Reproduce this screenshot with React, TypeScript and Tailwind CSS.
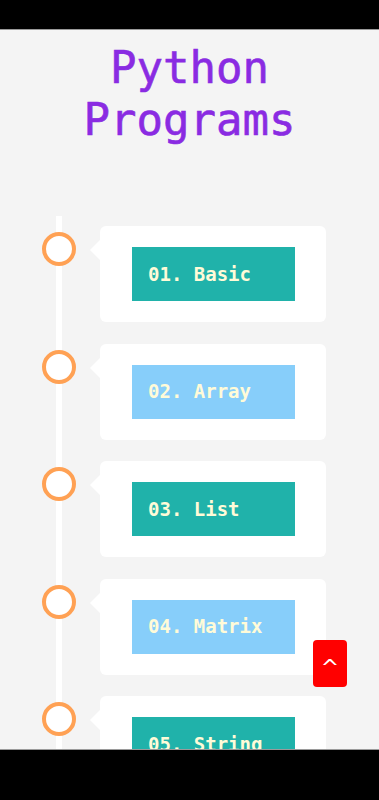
const programs = [
  { id: "01", name: "Basic", color: "bg-[#20b2aa]" },
  { id: "02", name: "Array", color: "bg-[#87cefa]" },
  { id: "03", name: "List", color: "bg-[#20b2aa]" },
  { id: "04", name: "Matrix", color: "bg-[#87cefa]" },
  { id: "05", name: "String", color: "bg-[#20b2aa]" },
  { id: "06", name: "Dictionary", color: "bg-[#87cefa]" },
];

export default function App() {
  return (
    <div className="h-[800px] w-[379px] flex flex-col bg-black overflow-hidden font-['DejaVu_Sans_Mono',monospace]">
      {/* top bar */}
      <div className="h-[30px] shrink-0 bg-black border-b border-[#9a9a9a]" />

      <main className="relative flex-1 overflow-hidden bg-[#f4f4f4]">
        <h1 className="mt-[12px] text-center text-[44px] leading-[52px] text-[#8a2be2] [-webkit-text-stroke:0.6px_#8a2be2]">
          Python
          <br />
          Programs
        </h1>

        {/* timeline */}
        <div className="relative mt-[70px] flex flex-col gap-[21.5px] pt-[10px] pl-[42px]">
          <div className="absolute left-[56px] top-0 h-[900px] w-[6px] bg-white" />
          {programs.map((p) => (
            <div key={p.id} className="relative flex items-start">
              <div className="relative mt-[6px] h-[34px] w-[34px] shrink-0 rounded-full border-4 border-[#ffa154] bg-white" />
              <div className="relative ml-[24px] h-[96px] w-[226px] rounded-[6px] bg-white pt-[21px] pl-[32px]">
                <div className="absolute left-[-10px] top-[14px] h-0 w-0 border-y-[10px] border-r-[10px] border-y-transparent border-r-white" />
                <div className={`flex h-[54px] w-[163px] items-center pl-[16px] text-[19px] font-bold text-[#fffbd8] ${p.color}`}>
                  {p.id}. {p.name}
                </div>
              </div>
            </div>
          ))}
        </div>

        {/* scroll to top */}
        <button className="absolute right-[32px] bottom-[62px] flex h-[47px] w-[34px] items-center justify-center rounded-[4px] bg-[#ff0000] pt-[8px] font-['DejaVu_Sans',sans-serif] text-[22px] leading-none text-white">
          ^
        </button>
      </main>

      {/* bottom bar */}
      <div className="h-[51px] shrink-0 bg-black border-t border-[#9a9a9a]" />
    </div>
  );
}
